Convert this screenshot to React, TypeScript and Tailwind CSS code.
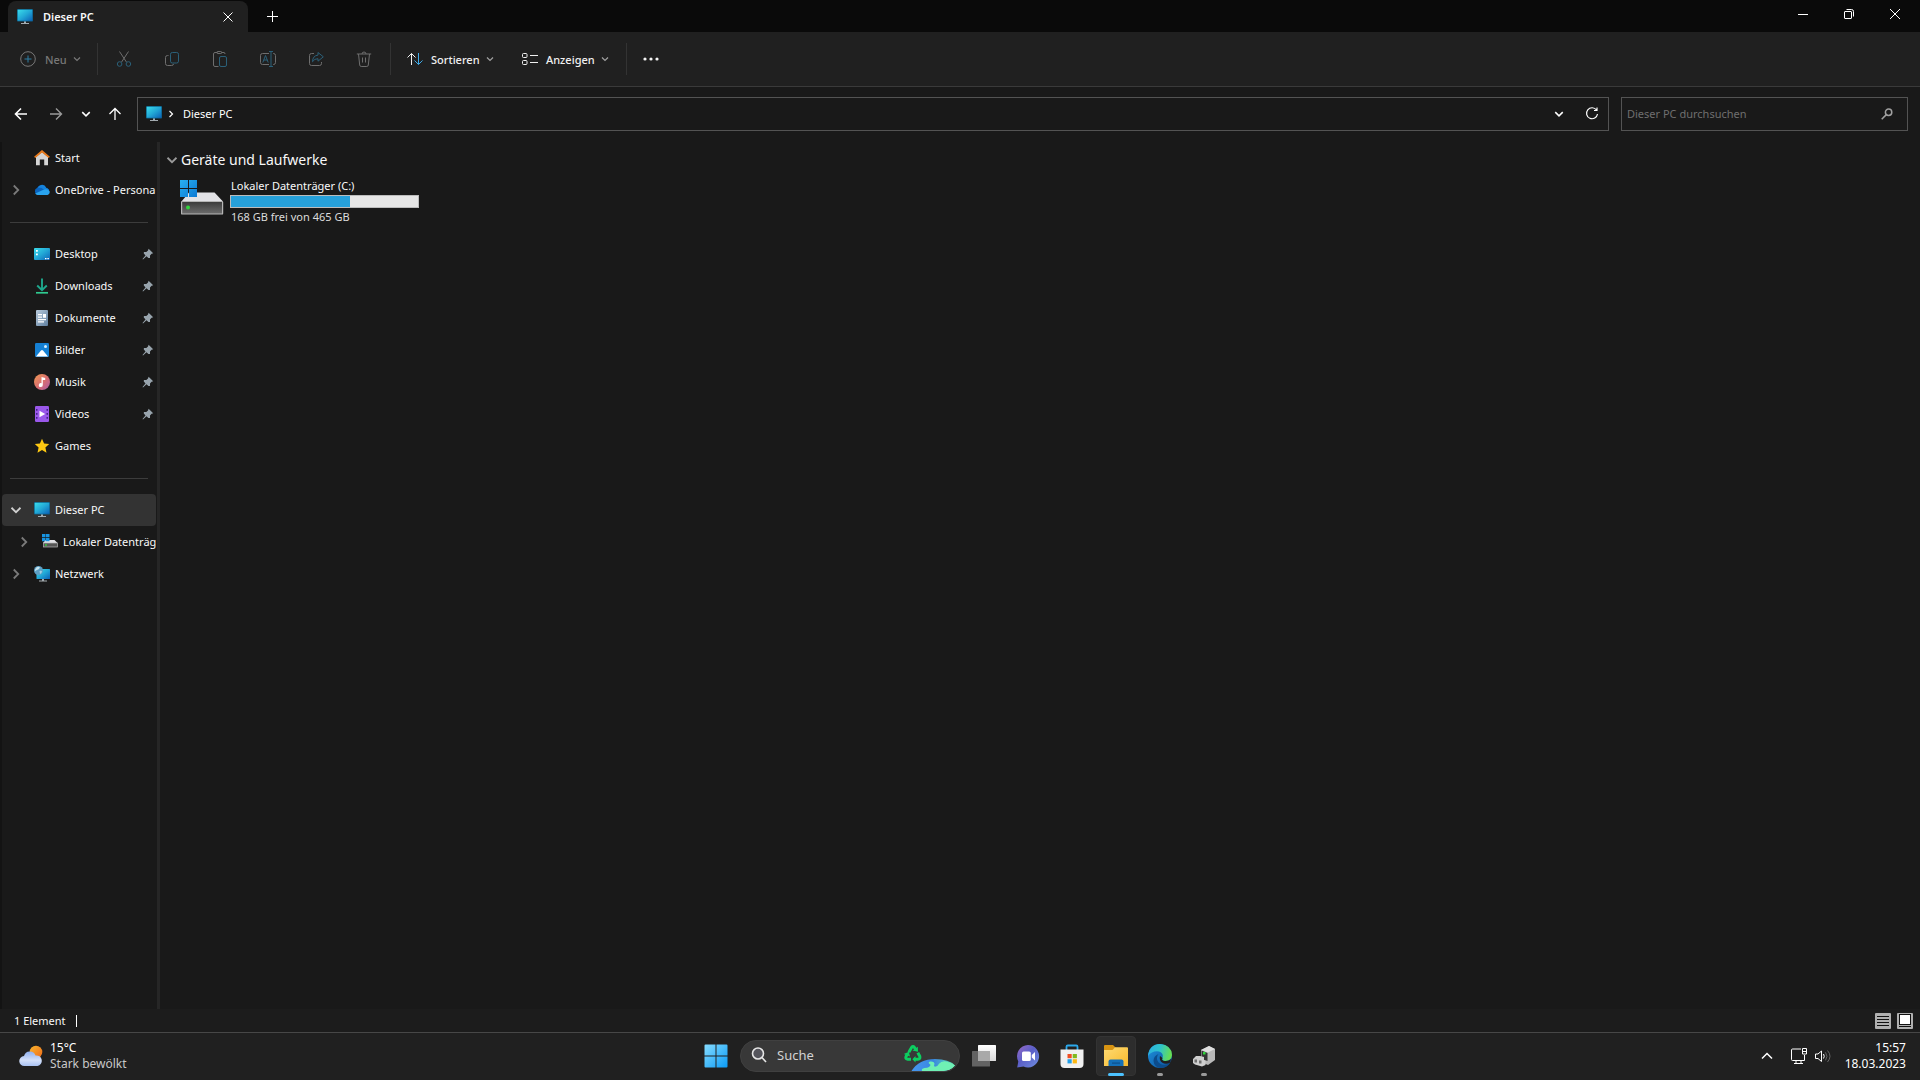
import React from "react";

const MonitorIcon = ({ className = "h-4 w-4" }: { className?: string }) => (
  <svg viewBox="0 0 16 16" className={className} aria-hidden="true">
    <defs>
      <linearGradient id="screen" x1="0" y1="0" x2="1" y2="1">
        <stop offset="0" stopColor="#3bdcea" />
        <stop offset="0.5" stopColor="#22a8d6" />
        <stop offset="1" stopColor="#0c62b8" />
      </linearGradient>
    </defs>
    <path d="M7 12h2v2h3v1H4v-1h3z" fill="#a3abb0" />
    <rect x="0" y="0" width="16" height="12.5" rx="0.8" fill="#0d5e86" />
    <rect x="0.7" y="0.7" width="14.6" height="11" rx="0.3" fill="url(#screen)" />
  </svg>
);

const Chevron = ({
  dir,
  className = "h-2 w-2",
}: {
  dir: "down" | "right" | "up";
  className?: string;
}) => {
  const d = {
    down: "M1 2.5 4 5.5 7 2.5",
    up: "M1 5.5 4 2.5 7 5.5",
    right: "M2.5 1 5.5 4 2.5 7",
  }[dir];
  return (
    <svg viewBox="0 0 8 8" className={className} fill="none" stroke="currentColor" strokeWidth="1.2" aria-hidden="true">
      <path d={d} />
    </svg>
  );
};

const Line = ({ children, className = "h-4 w-4" }: { children: React.ReactNode; className?: string }) => (
  <svg viewBox="0 0 16 16" className={className} fill="none" stroke="currentColor" strokeWidth="1" aria-hidden="true">
    {children}
  </svg>
);

const teal = "#2b6079";

const toolIcons = [
  {
    label: "Ausschneiden",
    icon: (
      <Line>
        <path d="M3.5.5 10.4 11M12.5.5 5.6 11" />
        <circle cx="3.6" cy="13" r="2.3" stroke={teal} />
        <circle cx="12.4" cy="13" r="2.3" stroke={teal} />
      </Line>
    ),
  },
  {
    label: "Kopieren",
    icon: (
      <Line>
        <path d="M4.5 4.5H3.5Q1.5 4.5 1.5 6.5v6q0 2 2 2h4q2 0 2-1.6" />
        <rect x="6.5" y="1.5" width="8" height="10.5" rx="1.8" stroke={teal} />
      </Line>
    ),
  },
  {
    label: "Einfügen",
    icon: (
      <Line>
        <path d="M5.5 1.5H3Q1.5 1.5 1.5 3v11q0 1.5 1.5 1.5h3.5M9.5 1.5H12Q13 1.5 13 3" />
        <rect x="4.8" y="0.5" width="5" height="2" rx="1" />
        <rect x="7.5" y="5.5" width="7" height="10" rx="1.5" stroke={teal} />
      </Line>
    ),
  },
  {
    label: "Umbenennen",
    icon: (
      <Line>
        <path d="M9 2.5H2.5q-2 0-2 2v7q0 2 2 2H9M13 2.5h.5q2 0 2 2v7q0 2-2 2H13" />
        <path d="M2.8 11.5 5.5 4.5 8.2 11.5M3.8 9h3.5M9 .5h4M11 .5v15M9 15.5h4" stroke={teal} />
      </Line>
    ),
  },
  {
    label: "Freigeben",
    icon: (
      <Line>
        <path d="M6 2.5H3.5q-2 0-2 2v8q0 2 2 2h8q2 0 2-2v-1.5" />
        <path d="M10 1.5 15.3 5.8 10 10.2V7.7Q6.5 7.5 4.5 10.7 4.7 4.7 10 4.1Z" stroke={teal} />
      </Line>
    ),
  },
  {
    label: "Löschen",
    icon: (
      <Line>
        <path d="M.8 3h14.4M6 3q0-2 2-2t2 2M2.5 3 3.7 14q.2 1.5 1.5 1.5h5.6q1.3 0 1.5-1.5L13.500 3M6.500 6.500v5M9.500 6.500v5" />
      </Line>
    ),
  },
];

const Divider = () => <div className="h-8 w-px shrink-0 bg-[#333333]" />;

const HomeIcon = () => (
  <svg viewBox="0 0 16 16" className="h-4 w-4" aria-hidden="true">
    <path d="M2 7 8 2l6 5v8.200H10.200V9.500H5.800v5.700H2z" fill="#d4d4d4" />
    <path d="M0.700 7.400 8 1.200l7.300 6.200" fill="none" stroke="#e87a1c" strokeWidth="1.900" />
  </svg>
);
const CloudIcon = () => (
  <svg viewBox="0 0 16 16" className="h-4 w-4" aria-hidden="true">
    <path d="M3.500 12.500A3.500 3.500 0 0 1 3 5.900 5 5 0 0 1 12 6.200 3.200 3.200 0 0 1 12.800 12.500z" fill="#0a63bd" />
    <path d="M4 6q3-1 5 1l6 3.500A3.300 3.300 0 0 0 12.500 6Q10.500 2 7 3 4.500 3.500 4 6z" fill="#1583dc" />
    <path d="M1.200 11.500 9.500 7.800Q13 6 15.500 9.300 16.300 12 13.500 13h-10Q2 12.700 1.200 11.500z" fill="#29a3ee" />
  </svg>
);
const DesktopIcon = () => (
  <svg viewBox="0 0 16 16" className="h-4 w-4" aria-hidden="true">
    <rect y="2" width="16" height="12" rx="1" fill="url(#screen)" />
    <path d="M2 4h1.800v1.800H2zM2 7.500h1.800v1.800H2zM11 12h1.500v1.200H11zM13.400 12h1.500v1.200h-1.500z" fill="#fff" />
  </svg>
);
const DownloadIcon = () => (
  <svg viewBox="0 0 16 16" className="h-4 w-4" fill="none" aria-hidden="true">
    <path d="M8 .5v11.500M3.200 7.500 8 12.200l4.800-4.700" stroke="#1ea78c" strokeWidth="1.900" />
    <path d="M2 14.800h12" stroke="#2fc98f" strokeWidth="1.700" />
  </svg>
);
const DocIcon = () => (
  <svg viewBox="0 0 16 16" className="h-4 w-4" aria-hidden="true">
    <defs>
      <linearGradient id="doc" x1="0" y1="0" x2="1" y2="1">
        <stop offset="0" stopColor="#b9cbdc" />
        <stop offset="1" stopColor="#5f7f9f" />
      </linearGradient>
    </defs>
    <rect x="2" width="12" height="16" rx="1" fill="url(#doc)" />
    <path d="M4 4h4v1.300H4zM4 6.500h4v1.300H4zM9 4h3v3.800H9zM4 9h8v1.200H4zM4 11.300h6v1.200H4z" fill="#fff" />
  </svg>
);
const PictureIcon = () => (
  <svg viewBox="0 0 16 16" className="h-4 w-4" aria-hidden="true">
    <rect x="1" y="1" width="14" height="14" rx="1.200" fill="#1580d3" />
    <path d="M2 14.500 7 8.500q1-1 2 0l5 6z" fill="#fff" />
    <circle cx="11.500" cy="4.500" r="1.500" fill="#d6efff" />
  </svg>
);
const MusicIcon = () => (
  <svg viewBox="0 0 16 16" className="h-4 w-4" aria-hidden="true">
    <defs>
      <linearGradient id="music" x1="0" y1="0" x2="1" y2="1">
        <stop offset="0" stopColor="#f09a52" />
        <stop offset="0.550" stopColor="#d76c72" />
        <stop offset="1" stopColor="#a95aa8" />
      </linearGradient>
    </defs>
    <circle cx="8" cy="8" r="8" fill="url(#music)" />
    <path d="M7.500 3v6.200A2 2 0 1 0 8.800 11V6h2.400V4z" fill="#fff" />
  </svg>
);
const VideoIcon = () => (
  <svg viewBox="0 0 16 16" className="h-4 w-4" aria-hidden="true">
    <rect x="1" width="14" height="16" rx="1.200" fill="#9a58ea" />
    <path d="M2 3h1.500v1.800H2zM2 7h1.500v1.800H2zM2 11h1.500v1.800H2zM12.500 3H14v1.800h-1.500zM12.500 7H14v1.800h-1.500zM12.500 11H14v1.800h-1.500z" fill="#42208a" />
    <path d="M5.500 4.700 11.200 8l-5.700 3.300z" fill="#fff" />
  </svg>
);
const StarIcon = () => (
  <svg viewBox="0 0 16 16" className="h-4 w-4" aria-hidden="true">
    <path d="M8 .8 10.100 5.600 15.200 6.100 11.400 9.600 12.500 14.800 8 12.100 3.500 14.800 4.600 9.600.8 6.100 5.900 5.600z" fill="#fdc812" />
  </svg>
);
const NetworkIcon = () => (
  <svg viewBox="0 0 16 16" className="h-4 w-4" aria-hidden="true">
    <path d="M8 13h2v1.500h3v1H5v-1h3z" fill="#a3abb0" />
    <rect x="2.500" y="3" width="13.500" height="10" rx="0.500" fill="url(#screen)" />
    <circle cx="4.500" cy="4.500" r="4.500" fill="#5d9fc4" />
    <path d="M2 2Q4 0 6 1.500 5 3.500 3 4T1 5.500Q.5 3.500 2 2z" fill="#c4e2ee" />
    <path d="M5.500 5q2-.5 2.500.500-.5 2-2 2.500z" fill="#a5d0e4" />
  </svg>
);
const DriveIcon = ({ className = "h-9 w-11" }: { className?: string }) => (
  <svg viewBox="0 0 44 36" className={className} aria-hidden="true">
    <defs>
      <linearGradient id="drive" x1="0" y1="0" x2="0" y2="1">
        <stop offset="0" stopColor="#3a3a3a" />
        <stop offset="1" stopColor="#6e6e6e" />
      </linearGradient>
      <linearGradient id="drivewin" x1="0" y1="0" x2="1" y2="1">
        <stop offset="0" stopColor="#2ab0ef" />
        <stop offset="1" stopColor="#0a78d4" />
      </linearGradient>
    </defs>
    <path d="M9 12.500h25.500L43 21.500H1.500z" fill="#e2e2e6" />
    <rect x="1.600" y="21.500" width="41" height="12.500" rx="0.600" fill="url(#drive)" stroke="#b5b5b5" strokeWidth="1.200" />
    <circle cx="8" cy="27.500" r="2" fill="#2fd63a" />
    <path d="M0 0h8v8H0zM9 0h8v8H9zM0 9h8v8H0zM9 9h8v8H9z" fill="url(#drivewin)" />
  </svg>
);
const SmallDriveIcon = () => (
  <svg viewBox="0 0 16 16" className="h-4 w-4" aria-hidden="true">
    <path d="M3.500 6H12.500L15.500 9H1z" fill="#e2e2e6" />
    <rect x="1.500" y="9" width="14" height="4" fill="#565656" stroke="#b5b5b5" strokeWidth="0.700" />
    <circle cx="4" cy="11" r="0.900" fill="#2fd63a" />
    <path d="M0 0h3.500v3.300H0zM4 0h3.500v3.300H4zM0 4h3.500v3.300H0zM4 4h3.500v3.300H4z" fill="#1794e2" />
  </svg>
);
const PinIcon = () => (
  <svg viewBox="0 0 12 12" className="h-3 w-3 shrink-0" aria-hidden="true">
    <path d="M6.600 .8 11.200 5.200 9.600 5.800 8 7.600 8 10 6.400 9.900 4.500 8.300 1 11.500.5 11 3.500 7.500 1.800 5.600 1.900 4 4.300 4 6 2.500z" fill="#98a4ad" />
  </svg>
);

type Item = {
  label: string;
  icon: React.ReactNode;
  expand?: "right" | "down";
  pinned?: boolean;
  nested?: boolean;
  active?: boolean;
};

const groups: Item[][] = [
  [
    { label: "Start", icon: <HomeIcon /> },
    { label: "OneDrive - Persona", icon: <CloudIcon />, expand: "right" },
  ],
  [
    { label: "Desktop", icon: <DesktopIcon />, pinned: true },
    { label: "Downloads", icon: <DownloadIcon />, pinned: true },
    { label: "Dokumente", icon: <DocIcon />, pinned: true },
    { label: "Bilder", icon: <PictureIcon />, pinned: true },
    { label: "Musik", icon: <MusicIcon />, pinned: true },
    { label: "Videos", icon: <VideoIcon />, pinned: true },
    { label: "Games", icon: <StarIcon /> },
  ],
  [
    { label: "Dieser PC", icon: <MonitorIcon />, expand: "down", active: true },
    { label: "Lokaler Datenträg", icon: <SmallDriveIcon />, expand: "right", nested: true },
    { label: "Netzwerk", icon: <NetworkIcon />, expand: "right" },
  ],
];

const SidebarRow = ({ item }: { item: Item }) => (
  <li>
    <button
      type="button"
      className={`flex h-8 w-full items-center overflow-hidden text-left ${item.nested ? "pl-4" : "pl-2"} ${
        item.active ? "rounded-sm bg-[#333333]" : ""
      }`}
    >
      <span className={`flex w-3 shrink-0 justify-center ${item.active ? "text-[#d0d0d0]" : "text-[#7a7a7a]"}`}>
        {item.expand && <Chevron dir={item.expand} className="h-3 w-3" />}
      </span>
      <span className="ml-3 shrink-0">{item.icon}</span>
      <span className="ml-1 flex-1 overflow-hidden pl-px whitespace-nowrap">{item.label}</span>
      {item.pinned && <span className="mr-0.5"><PinIcon /></span>}
    </button>
  </li>
);

const TaskButton = ({
  label,
  children,
  state,
}: {
  label: string;
  children: React.ReactNode;
  state?: "active" | "running";
}) => (
  <button
    type="button"
    aria-label={label}
    className={`relative flex h-10 w-10 items-center justify-center rounded ${
      state === "active" ? "border border-[#333333] bg-[#2d2d2d]" : ""
    }`}
  >
    {children}
    {state === "active" && <span className="absolute -bottom-px left-1/2 h-[3px] w-4 -translate-x-1/2 rounded-full bg-[#4cc2ff]" />}
    {state === "running" && <span className="absolute bottom-0 left-1/2 h-[3px] w-1.5 -translate-x-1/2 rounded-full bg-[#9a9a9a]" />}
  </button>
);

const TitleBar = () => (
  <header className="flex h-8 shrink-0 bg-[#0a0a0a] pl-2">
    <div className="mt-px flex w-60 items-center rounded-t-lg bg-[#202020] pr-2 pl-[9px]">
      <MonitorIcon className="h-4 w-4 shrink-0" />
      <span className="ml-2.5 flex-1 font-semibold">Dieser PC</span>
      <button type="button" aria-label="Tab schließen" className="flex h-6 w-6 items-center justify-center">
        <svg viewBox="0 0 10 10" className="h-2.5 w-2.5" stroke="#fff" strokeWidth="1" aria-hidden="true">
          <path d="M.5.5 9.500 9.500M9.500.5.5 9.500" />
        </svg>
      </button>
    </div>
    <button type="button" aria-label="Neuer Tab" className="flex w-12 items-center justify-center">
      <svg viewBox="0 0 11 11" className="h-[11px] w-[11px]" stroke="#fff" strokeWidth="1" aria-hidden="true">
        <path d="M5.500 0v11M0 5.500h11" />
      </svg>
    </button>
    <div className="mr-0.5 ml-auto flex h-7">
      <button type="button" aria-label="Minimieren" className="flex w-[46px] items-center justify-center">
        <svg viewBox="0 0 10 10" className="h-2.5 w-2.5" stroke="#fff" aria-hidden="true"><path d="M0 5.500h10" /></svg>
      </button>
      <button type="button" aria-label="Wiederherstellen" className="flex w-[46px] items-center justify-center">
        <svg viewBox="0 0 10 10" className="h-2.5 w-2.5" fill="none" stroke="#fff" aria-hidden="true">
          <rect x="0.500" y="2.500" width="7" height="7" rx="0.500" />
          <path d="M2.500.5h5q2 0 2 2v5" />
        </svg>
      </button>
      <button type="button" aria-label="Schließen" className="flex w-[46px] items-center justify-center">
        <svg viewBox="0 0 10 10" className="h-2.5 w-2.5" stroke="#fff" aria-hidden="true">
          <path d="M0 0 10 10M10 0 0 10" />
        </svg>
      </button>
    </div>
  </header>
);

const Toolbar = () => (
  <div className="flex h-[55px] shrink-0 items-center border-b border-[#3a3a3a] bg-[#202020] pl-5 font-medium text-[#f0f0f0]">
    <button type="button" disabled className="flex h-8 w-[77px] items-center text-[#787878]">
      <Line>
        <circle cx="8" cy="8" r="7.300" />
        <path d="M8 4.500v7M4.500 8h7" stroke="#2f7fa5" />
      </Line>
      <span className="mt-0.5 ml-[9px] flex-1 text-left">Neu</span>
      <Chevron dir="down" className="mr-4 h-2 w-2" />
    </button>
    <Divider />
    <div className="flex px-0.5 text-[#6e6e6e]">
      {toolIcons.map((t) => (
        <button key={t.label} type="button" disabled aria-label={t.label} className="flex h-8 w-12 items-center justify-center">
          {t.icon}
        </button>
      ))}
    </div>
    <Divider />
    <button type="button" className="flex h-8 w-[115px] items-center pl-4">
      <Line>
        <path d="M4.500 14V2.500M.5 6.500l4-4 4 4" />
        <path d="M11.500 2v11.500M7.500 9.500l4 4 4-4" stroke="#3fa9e6" />
      </Line>
      <span className="mt-0.5 ml-2">Sortieren</span>
      <Chevron dir="down" className="ml-1.5 h-2 w-2 text-[#a0a0a0]" />
    </button>
    <button type="button" className="flex h-8 w-[120px] items-center pl-4">
      <Line>
        <rect x="0.500" y="2.500" width="4.500" height="4" rx="1" />
        <rect x="0.500" y="9.500" width="4.500" height="4" rx="1" />
        <path d="M8 4.500h8M8 11.500h8" />
      </Line>
      <span className="mt-0.5 ml-2">Anzeigen</span>
      <Chevron dir="down" className="ml-1.5 h-2 w-2 text-[#a0a0a0]" />
    </button>
    <Divider />
    <button type="button" aria-label="Mehr anzeigen" className="flex h-8 w-12 items-center justify-center">
      <svg viewBox="0 0 16 4" className="h-1 w-4" fill="#f4f4f4" aria-hidden="true">
        <circle cx="2" cy="2" r="1.600" /><circle cx="8" cy="2" r="1.600" /><circle cx="14" cy="2" r="1.600" />
      </svg>
    </button>
  </div>
);

const AddressRow = () => (
  <div className="flex shrink-0 items-center pt-2.5 pr-3 pb-[11px] text-white">
    <nav className="flex w-[137px] shrink-0 items-center" aria-label="Navigation">
      <button type="button" aria-label="Zurück" className="ml-[13px] flex w-4 justify-center">
        <svg viewBox="0 0 14 14" className="h-3.5 w-3.5" fill="none" stroke="currentColor" strokeWidth="1.600" aria-hidden="true"><path d="M13 7H1.500M7 1.500 1.500 7 7 12.500" /></svg>
      </button>
      <button type="button" aria-label="Vorwärts" className="ml-[19px] flex w-4 justify-center text-[#9a9a9a]">
        <svg viewBox="0 0 14 14" className="h-3.5 w-3.5" fill="none" stroke="currentColor" strokeWidth="1.400" aria-hidden="true"><path d="M1 7h11.500M7 1.500 12.500 7 7 12.500" /></svg>
      </button>
      <button type="button" aria-label="Zuletzt besucht" className="ml-3.5 flex w-4 justify-center">
        <Chevron dir="down" className="h-2.5 w-2.5" />
      </button>
      <button type="button" aria-label="Nach oben" className="ml-[13px] flex w-4 justify-center">
        <svg viewBox="0 0 14 14" className="h-3.5 w-3.5" fill="none" stroke="currentColor" strokeWidth="1.300" aria-hidden="true"><path d="M7 13V1.500M1.500 7 7 1.500 12.500 7" /></svg>
      </button>
    </nav>
    <div className="flex h-[34px] flex-1 items-center border border-[#535353] pl-2">
      <MonitorIcon className="h-4 w-4" />
      <Chevron dir="right" className="ml-[5px] h-2 w-2" />
      <a href="#pc" className="ml-2">Dieser PC</a>
      <button type="button" aria-label="Vorherige Orte" className="ml-auto flex w-8 justify-center">
        <Chevron dir="down" className="h-2.5 w-2.5" />
      </button>
      <button type="button" aria-label="Aktualisieren" className="ml-px flex w-8 justify-center">
        <svg viewBox="0 0 14 14" className="h-3.5 w-3.5" fill="none" stroke="currentColor" strokeWidth="1.200" aria-hidden="true">
          <path d="M11.500 3A5.500 5.500 0 1 0 12.500 7M12 .5V3.500H9" />
        </svg>
      </button>
    </div>
    <label className="ml-3 flex h-[34px] w-[287px] shrink-0 items-center border border-[#535353] pr-3.5 pl-[5px]">
      <input type="text" aria-label="Dieser PC durchsuchen" placeholder="Dieser PC durchsuchen" className="min-w-0 flex-1 bg-transparent placeholder:text-[#6f6f6f] focus:outline-none" />
      <svg viewBox="0 0 12 12" className="h-3 w-3 text-[#a0a0a0]" fill="none" stroke="currentColor" strokeWidth="1.500" aria-hidden="true">
        <circle cx="7.600" cy="4.200" r="3.200" /><path d="M5.300 6.600.7 11.200" />
      </svg>
    </label>
  </div>
);

const Taskbar = () => (
  <footer className="grid h-12 shrink-0 grid-cols-[1fr_auto_1fr] items-center border-t border-[#474747] bg-[#202020] pb-px text-[12px] text-white">
    <button type="button" className="ml-[18px] flex items-center justify-self-start text-left">
      <svg viewBox="0 0 26 22" className="h-[22px] w-[26px]" aria-hidden="true">
        <defs>
          <linearGradient id="sun" x1="0" y1="0" x2="1" y2="1"><stop offset="0" stopColor="#f9b62e" /><stop offset="1" stopColor="#ee6a1a" /></linearGradient>
          <linearGradient id="cloud" x1="0" y1="0" x2="0" y2="1"><stop offset="0" stopColor="#8fb0f0" /><stop offset="0.600" stopColor="#d3e0fa" /><stop offset="1" stopColor="#a9c2f2" /></linearGradient>
        </defs>
        <circle cx="18" cy="7" r="6.300" fill="url(#sun)" />
        <path d="M6.500 21A5 5 0 0 1 6 11 6 6 0 0 1 17.500 10.500 5.300 5.300 0 0 1 19.500 21z" fill="url(#cloud)" />
      </svg>
      <span className="ml-1.5 flex flex-col leading-4">
        <span>15°C</span>
        <span className="text-[#c8c8c8]">Stark bewölkt</span>
      </span>
    </button>
    <div className="flex items-center gap-1">
      <TaskButton label="Start">
        <svg viewBox="0 0 24 24" className="h-6 w-6" aria-hidden="true">
          <defs><linearGradient id="win" x1="0" y1="0" x2="1" y2="1"><stop offset="0" stopColor="#86dcff" /><stop offset="1" stopColor="#0a9bf6" /></linearGradient></defs>
          <path d="M.5 1.500Q.5.5 1.500.5H11.500V11.500H.5zM12.500.5h10q1 0 1 1v10h-11zM.5 12.500h11v11h-10q-1 0-1-1zM12.500 12.500h11v10q0 1-1 1h-10z" fill="url(#win)" />
        </svg>
      </TaskButton>
      <button type="button" className="flex h-8 w-[220px] items-end overflow-hidden rounded-full border border-[#404040] bg-[#383838] pr-1 pl-2.5">
        <svg viewBox="0 0 16 16" className="mb-2 h-4 w-4" fill="none" stroke="#e6e6e6" strokeWidth="1.600" aria-hidden="true">
          <circle cx="7" cy="6.500" r="5.500" fill="#55555c" /><path d="M11 10.500 15 15" />
        </svg>
        <span className="mb-1.5 ml-2.5 text-[13px] leading-5 text-[#d2d2d2]">Suche</span>
        <svg viewBox="0 0 52 28" className="ml-auto h-7 w-[52px]" aria-hidden="true">
          <defs>
            <linearGradient id="earth" x1="0" y1="0" x2="1" y2="0"><stop offset="0" stopColor="#4697f0" /><stop offset="0.500" stopColor="#3a86e0" /><stop offset="1" stopColor="#63e2b0" /></linearGradient>
          </defs>
          <path d="M8.500 28Q16 16 32 16q14 0 20 6.500Q47 28 40 28z" fill="url(#earth)" />
          <path d="M19 28q-1-2.500 2.500-3 3 0 4.500-1 2.500-2 .5-3-2-1.500.5-2.500 4-.5 4.500 2-1 2.500.5 3.200 3-.5 4-3 2-2.700 6-2.500 6 .8 10 4.300Q47 28 40 28z" fill="#6ff0b4" />
          <g fill="none" stroke="#0ccf60" strokeWidth="3">
            <path d="M5.800 9.300 8.700 4.300q1.300-1.600 2.600 0l1.200 2" />
            <path d="M14.800 9.700l2 3.500q.6 3-1.900 3.100H11.500" />
            <path d="M8 16.300H4.700q-3-.5-1.300-3.500l.8-1.400" />
          </g>
          <path d="M9.500 7.500 15 8.800 14.800 3.800zM12.500 13 9.400 16.300 12.500 19.500zM.8 11 5.800 8.700 7 13.600z" fill="#0ccf60" />
        </svg>
      </button>
      <TaskButton label="Aktive Anwendungen">
        <svg viewBox="0 0 24 24" className="h-6 w-6" aria-hidden="true">
          <defs><linearGradient id="tv" x1="0" y1="0" x2="0" y2="1"><stop offset="0" stopColor="#fff" /><stop offset="1" stopColor="#d9d9d9" /></linearGradient></defs>
          <rect x="6" y="1" width="18" height="16" rx="0.600" fill="url(#tv)" />
          <rect x="0" y="7" width="18" height="15.500" rx="0.600" fill="#707070" fillOpacity="0.850" />
          <rect x="6" y="7" width="12" height="10" fill="#a9a9a9" />
        </svg>
      </TaskButton>
      <TaskButton label="Chat">
        <svg viewBox="0 0 24 24" className="h-6 w-6" aria-hidden="true">
          <defs><linearGradient id="chat" x1="0" y1="0" x2="1" y2="1"><stop offset="0" stopColor="#9a6bc8" /><stop offset="0.450" stopColor="#5b5fc7" /><stop offset="1" stopColor="#6f8fe0" /></linearGradient></defs>
          <path d="M12 1a11.200 11.200 0 1 1-4.500 21.500L1.200 23.500 2.300 17.500A11.300 11.300 0 0 1 12 1z" fill="url(#chat)" />
          <rect x="6" y="7.500" width="8.800" height="9.500" rx="1.600" fill="#fff" />
          <path d="M15.800 11 19 8v8.500l-3.200-3z" fill="#fff" />
        </svg>
      </TaskButton>
      <TaskButton label="Microsoft Store">
        <svg viewBox="0 0 24 24" className="h-6 w-6" aria-hidden="true">
          <path d="M6.500 6V2.800q0-1.300 1.300-1.300h8.400q1.300 0 1.300 1.300V6" fill="none" stroke="#2ba9ec" strokeWidth="1.800" />
          <path d="M.5 5.500h23v14.500q0 4-4 4h-15q-4 0-4-4z" fill="#f1f1f1" />
          <path d="M7.500 10h4.200v4.200H7.500z" fill="#f04e23" /><path d="M12.700 10h4.200v4.200h-4.200z" fill="#7fba20" />
          <path d="M7.500 15.200h4.200v4.200H7.500z" fill="#23a0ea" /><path d="M12.700 15.200h4.200v4.200h-4.200z" fill="#fdb813" />
        </svg>
      </TaskButton>
      <TaskButton label="Explorer" state="active">
        <svg viewBox="0 0 24 24" className="h-6 w-6" aria-hidden="true">
          <defs><linearGradient id="folder" x1="0" y1="0" x2="1" y2="1"><stop offset="0" stopColor="#ffdb73" /><stop offset="1" stopColor="#f7b92c" /></linearGradient></defs>
          <path d="M0 2q0-1 1-1h8l2.500 2.500L9 6H0z" fill="#d89412" />
          <path d="M0 6h8.500L11 3.300h12q1 0 1 1V22H0z" fill="url(#folder)" />
          <path d="M4.500 22v-4.500q0-2 2-2h11q2 0 2 2V22z" fill="#1470b8" />
          <path d="M8 18.500h8v1.200H8z" fill="#0c4f8b" />
        </svg>
      </TaskButton>
      <TaskButton label="Microsoft Edge" state="running">
        <svg viewBox="0 0 24 24" className="h-6 w-6" aria-hidden="true">
          <defs>
            <linearGradient id="edgeTop" x1="0" y1="0.200" x2="1" y2="0.400"><stop offset="0" stopColor="#2cafe2" /><stop offset="0.500" stopColor="#2fc4c9" /><stop offset="1" stopColor="#68df4f" /></linearGradient>
            <linearGradient id="edgeBody" x1="0" y1="0" x2="1" y2="1"><stop offset="0" stopColor="#1f94e0" /><stop offset="1" stopColor="#0b4f99" /></linearGradient>
          </defs>
          <circle cx="12" cy="12" r="12" fill="url(#edgeBody)" />
          <path d="M0 12Q1.500 0 12 0 23.500 1 24 11q-.5 6-7 6-4-.5-2.500-3 1.500-5-3.500-6.500Q4 6.500 0 12z" fill="url(#edgeTop)" />
          <path d="M9.500 11.500Q7.500 17 12.500 20q5.500 2.500 9.800-1.500-3 5.500-10.300 5.500-6-1.500-6.500-7 0-5 5-7z" fill="#0c4c8c" />
          <path d="M14.500 14q-1.500 2.500 2.500 3 4 .2 6-2l-.8 3.500Q18 21 14 18.500 11 16 12 12z" fill="#202020" />
        </svg>
      </TaskButton>
      <TaskButton label="Geräteverwaltung" state="running">
        <svg viewBox="0 0 24 24" className="h-6 w-6" aria-hidden="true">
          <path d="M9 6 17 2l6 3v11l-7 5-7-3z" fill="#b9b9b9" />
          <path d="M9 6 17 2l6 3-7 3.500z" fill="#dedede" />
          <path d="M9.500 6.500l6 2.500v8l-6-2z" fill="#333" />
          <path d="M11 8h2.500v2.500H11z" fill="#2fd63a" />
          <path d="M1 15 4 12h4l4 1v3l1.500 1v4L10 22.500 3 20.500 1 19z" fill="#cfcfcf" />
          <path d="M2.500 15.500H5v3H2.500zM7 16.500h2.500v3H7z" fill="#6f6f6f" />
        </svg>
      </TaskButton>
    </div>
    <div className="flex items-center justify-self-end pr-3.5">
      <button type="button" aria-label="Ausgeblendete Symbole einblenden" className="mr-[18px] flex">
        <svg viewBox="0 0 12 12" className="h-3 w-3" fill="none" stroke="#fff" strokeWidth="1.500" aria-hidden="true"><path d="M1 8.500 6 3.500 11 8.500" /></svg>
      </button>
      <button type="button" aria-label="Netzwerk und Lautstärke" className="mr-3.5 flex items-center gap-2">
        <svg viewBox="0 0 16 16" className="h-4 w-4" fill="none" stroke="#fff" strokeWidth="1" aria-hidden="true">
          <path d="M10 1H1.500q-1 0-1 1v9.500q0 1 1 1H13.500V7M3 15.500h9M5 12.500v3M10 12.500v3M11.500.5h4v5.500h-4zM11.500 3.500h4" />
        </svg>
        <svg viewBox="0 0 16 16" className="h-4 w-4" fill="none" stroke="#fff" strokeWidth="1" aria-hidden="true">
          <path d="M.5 6v4.500H3L6.500 13.500V3L3 6zM8.500 6q1.500 2.300 0 4.500" />
          <path d="M10.500 4.300q3 4 0 8M12.500 2.500q5 5.700 0 11.500" stroke="#666" />
        </svg>
      </button>
      <button type="button" className="flex flex-col items-end leading-4">
        <time>15:57</time>
        <time>18.03.2023</time>
      </button>
    </div>
  </footer>
);

export default function App() {
  return (
    <div className="flex h-screen flex-col overflow-hidden bg-[#191919] font-['Noto_Sans',sans-serif] text-[11px] leading-4 text-[#f8f8f8]">
      <TitleBar />
      <Toolbar />
      <AddressRow />
      <div className="flex min-h-0 flex-1">
        <aside className="w-[157px] shrink-0 overflow-hidden border-l-2 border-[#131313] pr-px">
          {groups.map((g, i) => (
            <React.Fragment key={i}>
              {i > 0 && <div className="flex h-8 items-center pr-2 pl-2"><hr className="w-full border-[#3c3c3c]" /></div>}
              <ul>{g.map((it) => <SidebarRow key={it.label} item={it} />)}</ul>
            </React.Fragment>
          ))}
        </aside>
        <div className="w-[3px] shrink-0 bg-[#262626]" />
        <main className="flex-1 pt-1.5 pl-1.5">
          <h2 className="flex h-6 items-center text-[14px] leading-6">
            <Chevron dir="down" className="mr-[3px] h-3 w-3 text-[#9a9a9a]" />
            Geräte und Laufwerke
          </h2>
          <div className="mt-1.5 flex pl-3.5">
            <div className="pt-0.5"><DriveIcon /></div>
            <div className="ml-1.5 w-[189px]">
              <p className="pl-px">Lokaler Datenträger (C:)</p>
              <div className="mt-px h-[13px] border border-[#bcbcbc] bg-[#e6e6e6]">
                <div className="h-full bg-[#26a0da]" style={{ width: `${((465 - 168) / 465) * 100}%` }} />
              </div>
              <p className="mt-px pl-px text-[#dcdcdc]">168 GB frei von 465 GB</p>
            </div>
          </div>
        </main>
      </div>
      <div className="flex h-[23px] shrink-0 items-center bg-[#1c1c1c] pr-[7px] pl-3.5">
        <span>1 Element</span>
        <span className="ml-2.5 h-3 w-px bg-white" />
        <div className="ml-auto flex gap-1.5">
          <button type="button" aria-label="Details">
            <svg viewBox="0 0 16 16" className="h-4 w-4" aria-hidden="true"><rect width="16" height="16" rx="1" fill="#b0b0b0" /><path d="M2 3.500h12M2 6.500h12M2 9.500h12M2 12.500h12" stroke="#111" /></svg>
          </button>
          <button type="button" aria-label="Große Symbole">
            <svg viewBox="0 0 16 16" className="h-4 w-4" aria-hidden="true"><rect width="16" height="16" rx="1" fill="#b0b0b0" /><rect x="2.500" y="1.500" width="11" height="10" fill="#fff" stroke="#111" /><path d="M2 13.500h12" stroke="#111" /></svg>
          </button>
        </div>
      </div>
      <Taskbar />
    </div>
  );
}
